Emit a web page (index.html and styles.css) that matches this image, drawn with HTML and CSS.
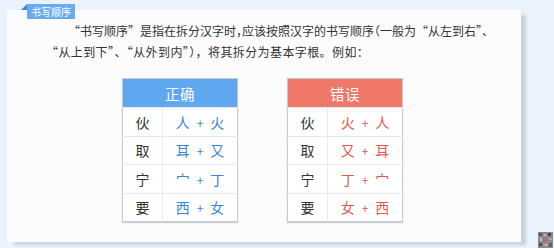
FILE: index.html
```html
<!DOCTYPE html>
<html lang="zh-CN">
<head>
<meta charset="utf-8">
<link rel="stylesheet" href="styles.css">
</head>
<body>
<div class="page">
  <section class="card">
    <div class="tag"><span class="fold"></span>书写顺序</div>
    <p class="intro"><span class="l1">“书写顺序”是指在拆分汉字时<span class="half">，</span>应该按照汉字的书写顺序<span class="half">（</span>一般为“从左到右”、</span><br><span class="l2">“从上到下”、“从外到内”），将其拆分为基本字根。例如：</span></p>
    <div class="tables">
      <table class="radix ok">
        <thead><tr><th colspan="2">正确</th></tr></thead>
        <tbody>
          <tr><td class="ch">伙</td><td class="parts">人<span class="plus">+</span>火</td></tr>
          <tr><td class="ch">取</td><td class="parts">耳<span class="plus">+</span>又</td></tr>
          <tr><td class="ch">宁</td><td class="parts">宀<span class="plus">+</span>丁</td></tr>
          <tr><td class="ch">要</td><td class="parts">西<span class="plus">+</span>女</td></tr>
        </tbody>
      </table>
      <table class="radix bad">
        <thead><tr><th colspan="2">错误</th></tr></thead>
        <tbody>
          <tr><td class="ch">伙</td><td class="parts">火<span class="plus">+</span>人</td></tr>
          <tr><td class="ch">取</td><td class="parts">又<span class="plus">+</span>耳</td></tr>
          <tr><td class="ch">宁</td><td class="parts">丁<span class="plus">+</span>宀</td></tr>
          <tr><td class="ch">要</td><td class="parts">女<span class="plus">+</span>西</td></tr>
        </tbody>
      </table>
    </div>
  </section>
  <div class="mark">
    <svg width="15" height="16" viewBox="0 0 15 16">
      <rect width="15" height="16" fill="#8a8a8a"/>
      <rect x="1" y="1" width="3" height="3" fill="#555"/>
      <rect x="6" y="2" width="2" height="2" fill="#bbb"/>
      <rect x="10" y="1" width="3" height="3" fill="#444"/>
      <rect x="2" y="6" width="2" height="3" fill="#c4c4c4"/>
      <rect x="5" y="7" width="4" height="3" fill="#d05a64"/>
      <rect x="11" y="6" width="3" height="2" fill="#aaa"/>
      <rect x="1" y="11" width="3" height="3" fill="#4a4a4a"/>
      <rect x="7" y="12" width="2" height="2" fill="#ccc"/>
      <rect x="11" y="11" width="3" height="4" fill="#606060"/>
    </svg>
  </div>
</div>
</body>
</html>
```

FILE: styles.css
```css
* { box-sizing: border-box; }
html, body { margin: 0; padding: 0; }
body {
  background: #eaf3fd;
  font-family: "Noto Sans CJK SC", "Noto Sans", sans-serif;
  color: #333;
  width: 554px;
  height: 248px;
  overflow: hidden;
}
.page {
  position: relative;
  width: 554px;
  height: 248px;
  padding: 10px 0 0 7px;
}
.card {
  position: relative;
  width: 514px;
  height: 232px;
  background: #fcfcfc;
  box-shadow: 6px 4px 3px -1px #c9d1dc;
  padding: 10px 0 0 39px;
}
.tag {
  position: absolute;
  left: 20px;
  top: -6px;
  height: 15px;
  padding: 0 4px;
  background: #6aabf0;
  color: #fff;
  font-size: 10px;
  line-height: 15px;
}
.fold {
  position: absolute;
  left: -6px;
  top: 0;
  width: 0;
  height: 0;
  border-style: solid;
  border-width: 0 0 6px 6px;
  border-color: transparent transparent #3d86d8 transparent;
}
.intro {
  margin: 0;
  font-size: 12px;
  line-height: 21px;
  white-space: nowrap;
}
.l1 {
  display: inline-block;
  padding-left: 22px;
}
.half {
  font-feature-settings: "halt";
}
.l2 {
  letter-spacing: 0.4px;
}
.tables {
  display: flex;
  justify-content: center;
  gap: 49px;
  margin-top: 16px;
  margin-left: -39px;
  margin-right: 3px;
}
.radix {
  border-collapse: collapse;
  width: 116px;
  border: 1px solid #c5cbd3;
  box-shadow: 0 1px 1px rgba(120,130,145,0.35);
  background: #fff;
}
.radix th {
  height: 29px;
  padding: 0;
  color: #fff;
  font-weight: normal;
  font-size: 14.5px;
  letter-spacing: 0.5px;
}
.ok th { background: #5fa8ef; }
.bad th { background: #f07868; }
.radix td {
  height: 28.5px;
  padding: 0;
  text-align: center;
  font-size: 14px;
  border-top: 1px solid #e6ebf1;
}
.radix td.ch {
  width: 40px;
  color: #333;
  border-right: 1px solid #e6ebf1;
}
.ok .parts { color: #3b86d4; }
.bad .parts { color: #e25a4c; }
.plus {
  display: inline-block;
  margin: 0 7px;
  font-size: 12px;
}
.mark {
  position: absolute;
  left: 538px;
  top: 232px;
  width: 15px;
  height: 16px;
  line-height: 0;
}
```
